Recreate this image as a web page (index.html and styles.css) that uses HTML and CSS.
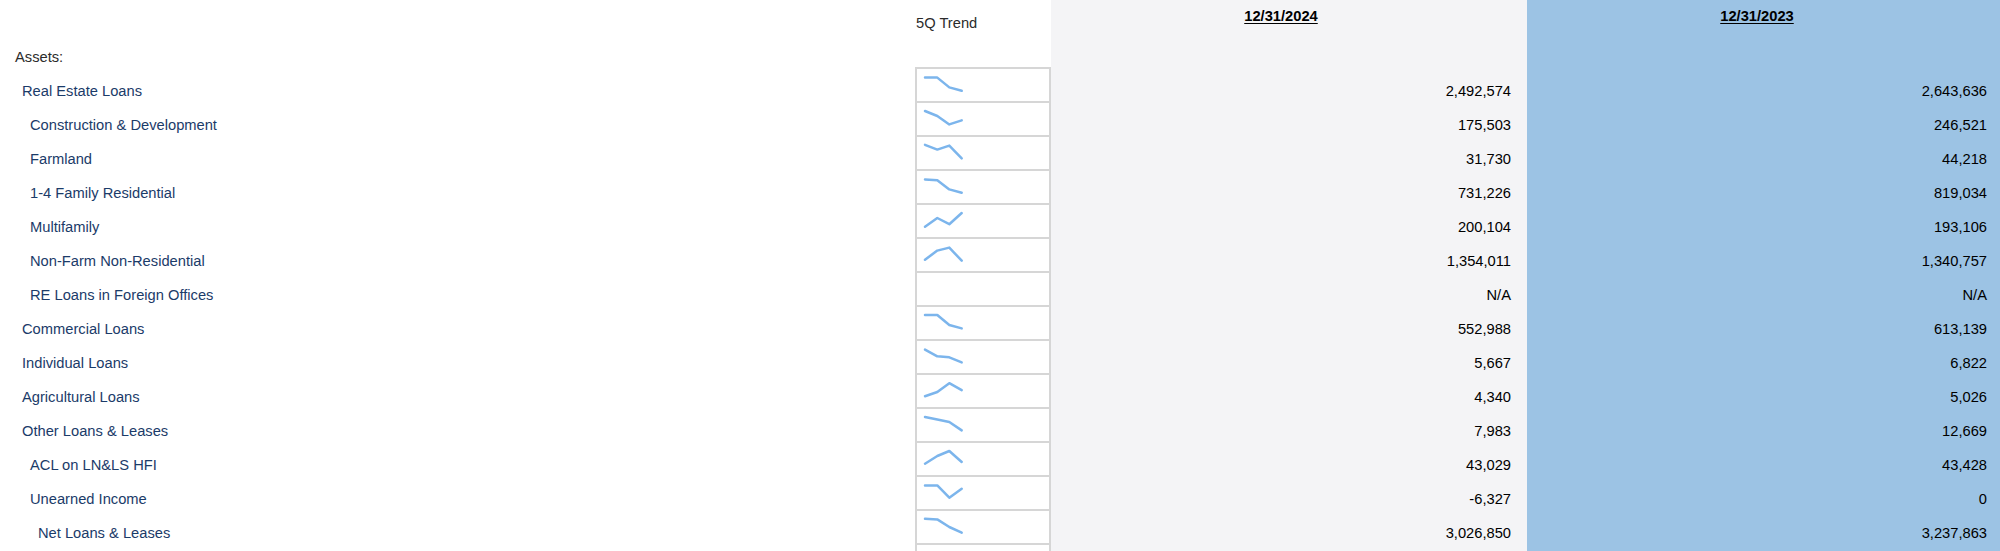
FILE: index.html
```html
<!DOCTYPE html>
<html lang="en">
<head>
<meta charset="utf-8">
<title>Assets</title>
<link rel="stylesheet" href="styles.css">
</head>
<body>
<div class="sheet">
  <div class="row head">
    <div class="label"></div>
    <div class="trend-head">5Q Trend</div>
    <div class="val p1 date"><span>12/31/2024</span></div>
    <div class="val p2 date"><span>12/31/2023</span></div>
  </div>

  <div class="row">
    <div class="label section">Assets:</div>
    <div class="spark-blank"></div>
    <div class="val p1"></div>
    <div class="val p2"></div>
  </div>

  <div class="row">
    <div class="label l1">Real Estate Loans</div>
    <div class="spark"><svg viewBox="0 0 41 18" width="41" height="18"><polyline points="2,2.6 14.3,2.6 26.3,12.4 38.7,15.8"/></svg></div>
    <div class="val p1">2,492,574</div>
    <div class="val p2">2,643,636</div>
  </div>

  <div class="row">
    <div class="label l2">Construction &amp; Development</div>
    <div class="spark"><svg viewBox="0 0 41 18" width="41" height="18"><polyline points="2,2 14.3,7 26.3,15.4 38.7,11.4"/></svg></div>
    <div class="val p1">175,503</div>
    <div class="val p2">246,521</div>
  </div>

  <div class="row">
    <div class="label l2">Farmland</div>
    <div class="spark"><svg viewBox="0 0 41 18" width="41" height="18"><polyline points="2,1.8 14.3,6.6 26.3,2.6 38.7,15.4"/></svg></div>
    <div class="val p1">31,730</div>
    <div class="val p2">44,218</div>
  </div>

  <div class="row">
    <div class="label l2">1-4 Family Residential</div>
    <div class="spark"><svg viewBox="0 0 41 18" width="41" height="18"><polyline points="2,2.4 14.3,3.2 26.3,12.4 38.7,15.7"/></svg></div>
    <div class="val p1">731,226</div>
    <div class="val p2">819,034</div>
  </div>

  <div class="row">
    <div class="label l2">Multifamily</div>
    <div class="spark"><svg viewBox="0 0 41 18" width="41" height="18"><polyline points="2,15.8 14.3,7 26.3,13.2 38.7,2"/></svg></div>
    <div class="val p1">200,104</div>
    <div class="val p2">193,106</div>
  </div>

  <div class="row">
    <div class="label l2">Non-Farm Non-Residential</div>
    <div class="spark"><svg viewBox="0 0 41 18" width="41" height="18"><polyline points="2,14.7 14.3,5.6 26.3,2.6 38.7,15.7"/></svg></div>
    <div class="val p1">1,354,011</div>
    <div class="val p2">1,340,757</div>
  </div>

  <div class="row">
    <div class="label l2">RE Loans in Foreign Offices</div>
    <div class="spark"></div>
    <div class="val p1">N/A</div>
    <div class="val p2">N/A</div>
  </div>

  <div class="row">
    <div class="label l1">Commercial Loans</div>
    <div class="spark"><svg viewBox="0 0 41 18" width="41" height="18"><polyline points="2,2 14.3,2 26.3,12 38.7,15.4"/></svg></div>
    <div class="val p1">552,988</div>
    <div class="val p2">613,139</div>
  </div>

  <div class="row">
    <div class="label l1">Individual Loans</div>
    <div class="spark"><svg viewBox="0 0 41 18" width="41" height="18"><polyline points="2,2.6 14.3,9.3 26.3,10.3 38.7,15.4"/></svg></div>
    <div class="val p1">5,667</div>
    <div class="val p2">6,822</div>
  </div>

  <div class="row">
    <div class="label l1">Agricultural Loans</div>
    <div class="spark"><svg viewBox="0 0 41 18" width="41" height="18"><polyline points="2,15.2 14.3,11 26.3,2.2 38.7,9.2"/></svg></div>
    <div class="val p1">4,340</div>
    <div class="val p2">5,026</div>
  </div>

  <div class="row">
    <div class="label l1">Other Loans &amp; Leases</div>
    <div class="spark"><svg viewBox="0 0 41 18" width="41" height="18"><polyline points="2,2 14.3,4.4 26.3,7 38.7,15.4"/></svg></div>
    <div class="val p1">7,983</div>
    <div class="val p2">12,669</div>
  </div>

  <div class="row">
    <div class="label l2">ACL on LN&amp;LS HFI</div>
    <div class="spark"><svg viewBox="0 0 41 18" width="41" height="18"><polyline points="2,14.7 14.3,7 26.3,2 38.7,13"/></svg></div>
    <div class="val p1">43,029</div>
    <div class="val p2">43,428</div>
  </div>

  <div class="row">
    <div class="label l2">Unearned Income</div>
    <div class="spark"><svg viewBox="0 0 41 18" width="41" height="18"><polyline points="2,2.4 14.3,2.4 26.3,14.7 38.7,5.7"/></svg></div>
    <div class="val p1">-6,327</div>
    <div class="val p2">0</div>
  </div>

  <div class="row">
    <div class="label l3">Net Loans &amp; Leases</div>
    <div class="spark"><svg viewBox="0 0 41 18" width="41" height="18"><polyline points="2,1.8 14.3,2.4 26.3,10 38.7,15.7"/></svg></div>
    <div class="val p1">3,026,850</div>
    <div class="val p2">3,237,863</div>
  </div>

  <div class="row">
    <div class="label"></div>
    <div class="spark"></div>
    <div class="val p1"></div>
    <div class="val p2"></div>
  </div>
</div>
</body>
</html>
```
FILE: styles.css
```css
html {
  overflow: hidden;
  background: #ffffff;
}

body {
  margin: 0;
  font-family: "Liberation Sans", Arial, Helvetica, sans-serif;
  font-size: 14.7px;
  line-height: 17px;
  color: #000;
}

.sheet {
  display: grid;
  grid-template-columns: 915px 136px 476px 1fr;
  grid-template-rows: 33px;
  grid-auto-rows: 34px;
}

.row {
  display: contents;
}

.row > div {
  box-sizing: border-box;
  padding-top: 16px;
  white-space: nowrap;
}

.label {
  color: #1b3b69;
}

.label.section {
  color: #2b2b2b;
  padding-left: 15px;
}

.l1 { padding-left: 22px; }
.l2 { padding-left: 30px; }
.l3 { padding-left: 38px; }

.val {
  text-align: right;
}

.p1 {
  background: #f4f4f6;
  padding-right: 16px;
}

.p2 {
  background: #9cc3e4;
  padding-right: 13px;
}

.head > .trend-head {
  padding-top: 15px;
  padding-left: 1px;
  color: #2b2b2b;
}

.head > .date {
  padding-top: 8px;
  text-align: center;
  font-weight: bold;
}

.date span {
  text-decoration: underline;
  text-underline-offset: 2px;
}

.row > .spark {
  border: 2px solid #d6d6d6;
  border-bottom: 0;
  padding: 6px 0 0 6px;
}

.spark svg {
  display: block;
  overflow: visible;
}

.spark polyline {
  fill: none;
  stroke: #7cb5ec;
  stroke-width: 2.5;
  stroke-linejoin: round;
  stroke-linecap: round;
}
```
